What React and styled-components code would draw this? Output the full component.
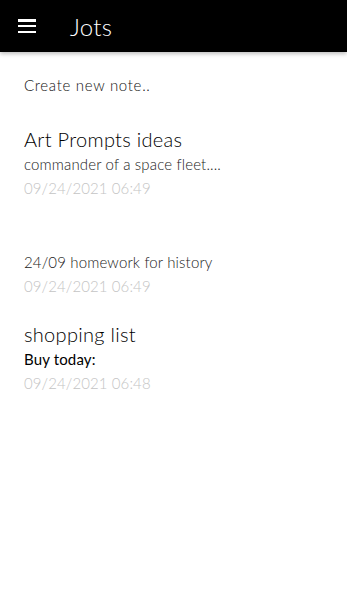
import React from "react";
import styled, { createGlobalStyle } from "styled-components";

const Global = createGlobalStyle`
  html, body { margin: 0; padding: 0; background: #fff; }
  body { font-family: "Lato", "Open Sans", sans-serif; font-weight: 300; color: #111; }
`;

const Page = styled.div`
  width: 347px;
  min-height: 592px;
  background: #fff;
`;

const Header = styled.header`
  height: 52px;
  background: #000;
  display: flex;
  align-items: center;
  box-shadow: 0 2px 4px rgba(0, 0, 0, 0.25);
`;

const MenuButton = styled.button`
  width: 18px;
  height: 14px;
  margin-left: 18px;
  padding: 0;
  border: none;
  background: transparent;
  display: flex;
  flex-direction: column;
  justify-content: space-between;
  cursor: pointer;
`;

const Bar = styled.span`
  display: block;
  height: 2.5px;
  background: #fff;
`;

const Title = styled.h1`
  margin: 0 0 0 34px;
  font-size: 24px;
  font-weight: 300;
  color: #fff;
  letter-spacing: 0.3px;
`;

const Content = styled.main`
  padding: 22px 24px 0;
  display: flex;
  flex-direction: column;
  gap: 30px;
`;

const CreateNote = styled.div`
  font-size: 15px;
  line-height: 22px;
  color: #111;
  letter-spacing: 0.7px;
`;

const Notes = styled.div`
  display: flex;
  flex-direction: column;
  gap: 23.5px;
`;

const Note = styled.div`
  display: flex;
  flex-direction: column;
`;

const NoteTitle = styled.div`
  font-size: 20px;
  line-height: 26px;
  min-height: 26px;
  color: #000;
  letter-spacing: 0.3px;
`;

const NoteBody = styled.div`
  font-size: 15px;
  line-height: 24px;
  color: ${(p) => (p.$strong ? "#000" : "#1a1a1a")};
  font-weight: ${(p) => (p.$strong ? 400 : 300)};
  letter-spacing: 0.15px;
`;

const NoteDate = styled.div`
  font-size: 15px;
  line-height: 24px;
  color: #c4c4c4;
  letter-spacing: 0.1px;
`;

const notes = [
  { title: "Art Prompts ideas", body: "commander of a space fleet....", date: "09/24/2021 06:49" },
  { title: "", body: "24/09 homework for history", date: "09/24/2021 06:49" },
  { title: "shopping list", body: "Buy today:", date: "09/24/2021 06:48", strong: true },
];

export default function App() {
  return (
    <Page>
      <Global />
      <Header>
        <MenuButton aria-label="menu">
          <Bar />
          <Bar />
          <Bar />
        </MenuButton>
        <Title>Jots</Title>
      </Header>
      <Content>
        <CreateNote>Create new note..</CreateNote>
        <Notes>
          {notes.map((n, i) => (
            <Note key={i}>
              <NoteTitle>{n.title}</NoteTitle>
              <NoteBody $strong={n.strong}>{n.body}</NoteBody>
              <NoteDate>{n.date}</NoteDate>
            </Note>
          ))}
        </Notes>
      </Content>
    </Page>
  );
}
